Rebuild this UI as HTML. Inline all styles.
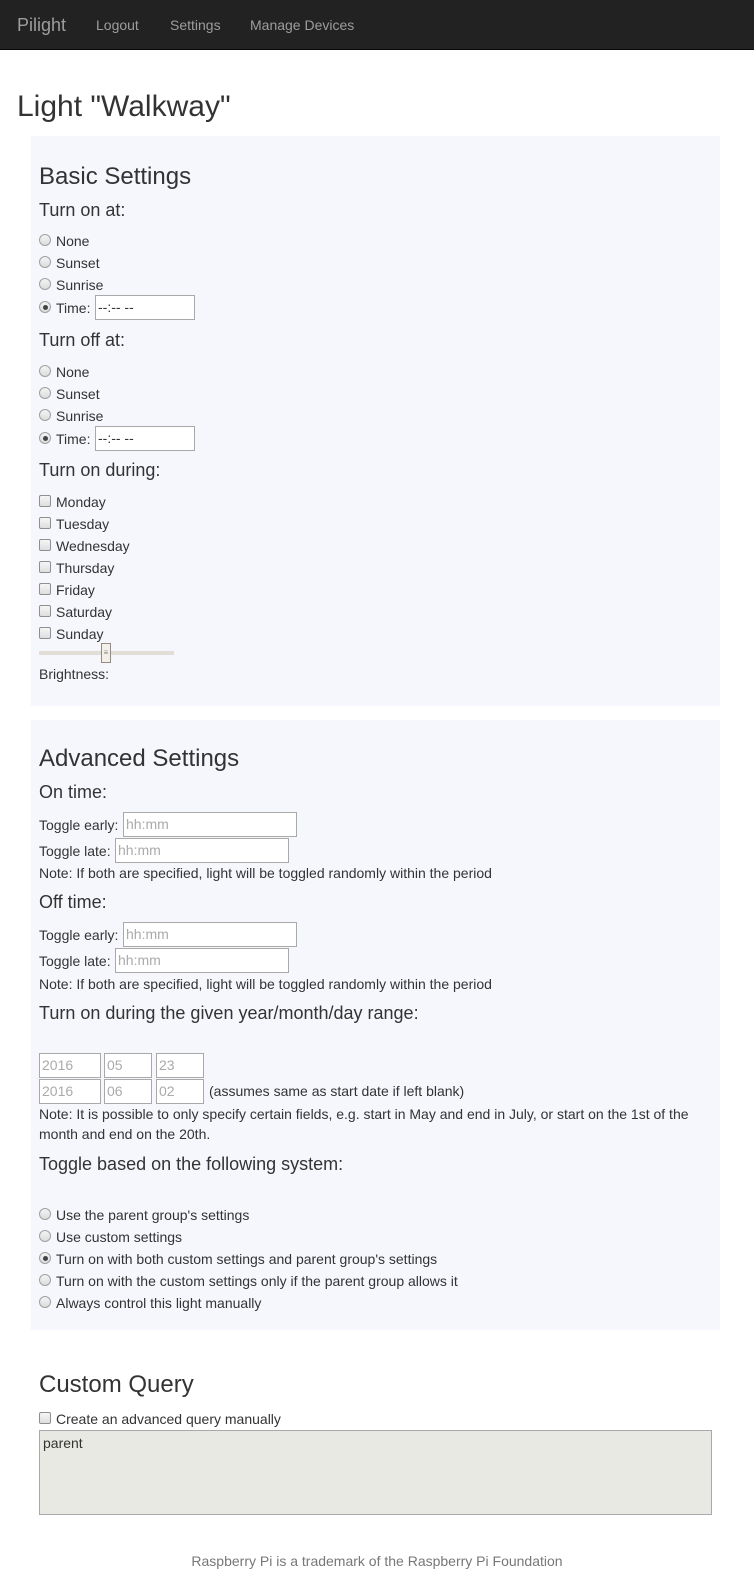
<!DOCTYPE html>
<html><head><meta charset="utf-8"><style>
*{box-sizing:border-box;margin:0;padding:0}
body{width:754px;height:1574px;position:relative;background:#fff;font-family:"Liberation Sans",sans-serif;font-size:14px;color:#333;overflow:hidden}
.a{position:absolute;white-space:nowrap;line-height:20px}
.nav{position:absolute;left:0;top:0;width:754px;height:50px;background:#222;border-bottom:1px solid #080808}
.nav span{position:absolute;top:15px;line-height:20px;color:#9d9d9d}
.panel{position:absolute;left:31px;width:689px;background:#f5f7fd}
.h3{font-size:24px;line-height:28px}
.h4{font-size:18px;line-height:22px}
.r{position:absolute;width:12px;height:12px;border-radius:50%;border:1px solid #a0a0a0;background:linear-gradient(#f4f4f4,#dcdcdc)}
.r.on::after{content:"";position:absolute;left:2.5px;top:2.5px;width:5px;height:5px;border-radius:50%;background:#444}
.c{position:absolute;width:12px;height:12px;border-radius:2px;border:1px solid #8f8f8f;background:linear-gradient(#f6f6f6,#dedede)}
.i{position:absolute;border:1px solid #a9a9a9;background:#fff;height:25px;line-height:23px;padding-left:2px;color:#aaa;font-size:14px}
</style></head><body>
<div class="nav">
<span style="left:17px;font-size:18px;color:#9d9d9d">Pilight</span>
<span style="left:96px">Logout</span>
<span style="left:170px">Settings</span>
<span style="left:250px">Manage Devices</span>
</div>
<div class="a" style="left:17px;top:90px;font-size:30px;line-height:34px">Light "Walkway"</div>

<div class="panel" style="top:136px;height:570px"></div>
<div class="a h3" style="left:39px;top:163px">Basic Settings</div>
<div class="a h4" style="left:39px;top:199px">Turn on at:</div>
<div class="r" style="left:39px;top:234px"></div><div class="a" style="left:56px;top:231px">None</div>
<div class="r" style="left:39px;top:256px"></div><div class="a" style="left:56px;top:253px">Sunset</div>
<div class="r" style="left:39px;top:278px"></div><div class="a" style="left:56px;top:275px">Sunrise</div>
<div class="r on" style="left:39px;top:301px"></div><div class="a" style="left:56px;top:298px">Time:</div>
<div class="i" style="left:95px;top:295px;width:100px;color:#333">--:-- --</div>
<div class="a h4" style="left:39px;top:329px">Turn off at:</div>
<div class="r" style="left:39px;top:365px"></div><div class="a" style="left:56px;top:362px">None</div>
<div class="r" style="left:39px;top:387px"></div><div class="a" style="left:56px;top:384px">Sunset</div>
<div class="r" style="left:39px;top:409px"></div><div class="a" style="left:56px;top:406px">Sunrise</div>
<div class="r on" style="left:39px;top:432px"></div><div class="a" style="left:56px;top:429px">Time:</div>
<div class="i" style="left:95px;top:426px;width:100px;color:#333">--:-- --</div>
<div class="a h4" style="left:39px;top:459px">Turn on during:</div>
<div class="c" style="left:39px;top:495px"></div><div class="a" style="left:56px;top:492px">Monday</div>
<div class="c" style="left:39px;top:517px"></div><div class="a" style="left:56px;top:514px">Tuesday</div>
<div class="c" style="left:39px;top:539px"></div><div class="a" style="left:56px;top:536px">Wednesday</div>
<div class="c" style="left:39px;top:561px"></div><div class="a" style="left:56px;top:558px">Thursday</div>
<div class="c" style="left:39px;top:583px"></div><div class="a" style="left:56px;top:580px">Friday</div>
<div class="c" style="left:39px;top:605px"></div><div class="a" style="left:56px;top:602px">Saturday</div>
<div class="c" style="left:39px;top:627px"></div><div class="a" style="left:56px;top:624px">Sunday</div>
<div style="position:absolute;left:39px;top:651px;width:135px;height:4px;background:#e2ddd7"></div>
<div style="position:absolute;left:101px;top:643px;width:10px;height:20px;background:#f3efe9;border:1px solid #948a7e;font-size:8px;line-height:17px;text-align:center;color:#888">≡</div>
<div class="a" style="left:39px;top:664px">Brightness:</div>

<div class="panel" style="top:720px;height:610px"></div>
<div class="a h3" style="left:39px;top:745px">Advanced Settings</div>
<div class="a h4" style="left:39px;top:781px">On time:</div>
<div class="a" style="left:39px;top:815px">Toggle early:</div><div class="i" style="left:123px;top:812px;width:174px">hh:mm</div>
<div class="a" style="left:39px;top:841px">Toggle late:</div><div class="i" style="left:115px;top:838px;width:174px">hh:mm</div>
<div class="a" style="left:39px;top:863px">Note: If both are specified, light will be toggled randomly within the period</div>
<div class="a h4" style="left:39px;top:891px">Off time:</div>
<div class="a" style="left:39px;top:925px">Toggle early:</div><div class="i" style="left:123px;top:922px;width:174px">hh:mm</div>
<div class="a" style="left:39px;top:951px">Toggle late:</div><div class="i" style="left:115px;top:948px;width:174px">hh:mm</div>
<div class="a" style="left:39px;top:974px">Note: If both are specified, light will be toggled randomly within the period</div>
<div class="a h4" style="left:39px;top:1002px">Turn on during the given year/month/day range:</div>
<div class="i" style="left:39px;top:1053px;width:62px">2016</div>
<div class="i" style="left:104px;top:1053px;width:48px">05</div>
<div class="i" style="left:156px;top:1053px;width:48px">23</div>
<div class="i" style="left:39px;top:1079px;width:62px">2016</div>
<div class="i" style="left:104px;top:1079px;width:48px">06</div>
<div class="i" style="left:156px;top:1079px;width:48px">02</div>
<div class="a" style="left:209px;top:1081px">(assumes same as start date if left blank)</div>
<div class="a" style="left:39px;top:1104px">Note: It is possible to only specify certain fields, e.g. start in May and end in July, or start on the 1st of the</div>
<div class="a" style="left:39px;top:1124px">month and end on the 20th.</div>
<div class="a h4" style="left:39px;top:1153px">Toggle based on the following system:</div>
<div class="r" style="left:39px;top:1208px"></div><div class="a" style="left:56px;top:1205px">Use the parent group's settings</div>
<div class="r" style="left:39px;top:1230px"></div><div class="a" style="left:56px;top:1227px">Use custom settings</div>
<div class="r on" style="left:39px;top:1252px"></div><div class="a" style="left:56px;top:1249px">Turn on with both custom settings and parent group's settings</div>
<div class="r" style="left:39px;top:1274px"></div><div class="a" style="left:56px;top:1271px">Turn on with the custom settings only if the parent group allows it</div>
<div class="r" style="left:39px;top:1296px"></div><div class="a" style="left:56px;top:1293px">Always control this light manually</div>

<div class="a h3" style="left:39px;top:1371px">Custom Query</div>
<div class="c" style="left:39px;top:1412px"></div><div class="a" style="left:56px;top:1409px">Create an advanced query manually</div>
<div style="position:absolute;left:39px;top:1430px;width:673px;height:85px;background:#e9e9e3;border:1px solid #a9a9a9;padding:2px 3px;line-height:20px">parent</div>
<div class="a" style="left:0;width:754px;text-align:center;top:1551px;color:#777">Raspberry Pi is a trademark of the Raspberry Pi Foundation</div>
</body></html>
